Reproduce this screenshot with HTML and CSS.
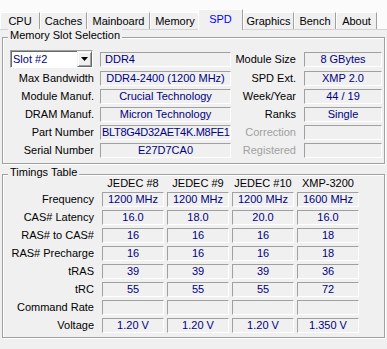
FILE: index.html
```html
<!DOCTYPE html>
<html>
<head>
<meta charset="utf-8">
<link rel="stylesheet" href="styles.css">
</head>
<body>
<div class="tabs">
  <div class="tab w-cpu">CPU</div>
  <div class="tab w-caches">Caches</div>
  <div class="tab w-main">Mainboard</div>
  <div class="tab w-mem">Memory</div>
  <div class="tab sel w-spd">SPD</div>
  <div class="tab w-gfx">Graphics</div>
  <div class="tab w-bench">Bench</div>
  <div class="tab w-about">About</div>
</div>
<div class="panel">
  <div class="group mem">
    <span class="group-title">Memory Slot Selection</span>
    <div class="mem-grid">
      <div class="select">
        <span class="select-text">Slot #2</span>
        <span class="select-btn"><svg width="7" height="4" viewBox="0 0 7 4"><polygon points="0,0 7,0 3.5,4" fill="#000"/></svg></span>
      </div>
      <div class="box left r1">DDR4</div>
      <div class="lbl rl r1">Module Size</div>
      <div class="box r1">8 GBytes</div>

      <div class="lbl">Max Bandwidth</div>
      <div class="box">DDR4-2400 (1200 MHz)</div>
      <div class="lbl rl">SPD Ext.</div>
      <div class="box">XMP 2.0</div>

      <div class="lbl">Module Manuf.</div>
      <div class="box">Crucial Technology</div>
      <div class="lbl rl">Week/Year</div>
      <div class="box">44 / 19</div>

      <div class="lbl">DRAM Manuf.</div>
      <div class="box">Micron Technology</div>
      <div class="lbl rl">Ranks</div>
      <div class="box">Single</div>

      <div class="lbl">Part Number</div>
      <div class="box tight">BLT8G4D32AET4K.M8FE1</div>
      <div class="lbl rl dis">Correction</div>
      <div class="box"></div>

      <div class="lbl">Serial Number</div>
      <div class="box">E27D7CA0</div>
      <div class="lbl rl dis">Registered</div>
      <div class="box"></div>
    </div>
  </div>

  <div class="group timings">
    <span class="group-title">Timings Table</span>
    <div class="t-grid">
      <div></div>
      <div class="th">JEDEC #8</div>
      <div class="th">JEDEC #9</div>
      <div class="th">JEDEC #10</div>
      <div class="th">XMP-3200</div>

      <div class="lbl tl">Frequency</div>
      <div class="box">1200 MHz</div>
      <div class="box">1200 MHz</div>
      <div class="box">1200 MHz</div>
      <div class="box">1600 MHz</div>

      <div class="lbl tl">CAS# Latency</div>
      <div class="box">16.0</div>
      <div class="box">18.0</div>
      <div class="box">20.0</div>
      <div class="box">16.0</div>

      <div class="lbl tl">RAS# to CAS#</div>
      <div class="box">16</div>
      <div class="box">16</div>
      <div class="box">16</div>
      <div class="box">18</div>

      <div class="lbl tl">RAS# Precharge</div>
      <div class="box">16</div>
      <div class="box">16</div>
      <div class="box">16</div>
      <div class="box">18</div>

      <div class="lbl tl">tRAS</div>
      <div class="box">39</div>
      <div class="box">39</div>
      <div class="box">39</div>
      <div class="box">36</div>

      <div class="lbl tl">tRC</div>
      <div class="box">55</div>
      <div class="box">55</div>
      <div class="box">55</div>
      <div class="box">72</div>

      <div class="lbl tl">Command Rate</div>
      <div class="box"></div>
      <div class="box"></div>
      <div class="box"></div>
      <div class="box"></div>

      <div class="lbl tl">Voltage</div>
      <div class="box">1.20 V</div>
      <div class="box">1.20 V</div>
      <div class="box">1.20 V</div>
      <div class="box">1.350 V</div>
    </div>
  </div>
</div>
</body>
</html>
```
FILE: styles.css
```css
* { box-sizing: border-box; }
html, body { margin: 0; padding: 0; }
body {
  width: 387px;
  height: 349px;
  overflow: hidden;
  background: #f0f0f0;
  font-family: "Liberation Sans", Arial, sans-serif;
  font-size: 11px;
  color: #000;
}

/* Tabs */
.tabs {
  display: flex;
  align-items: flex-end;
  height: 30px;
  background: #fbfbfb;
  border-bottom: 1px solid #d4d4d4;
}
.tab {
  height: 17px;
  line-height: 16px;
  text-align: center;
  white-space: nowrap;
  background: #f0f0f0;
  border-top: 1px solid #fff;
  border-left: 1px solid #fff;
  border-right: 1px solid #a0a0a0;
}
.tab.sel {
  height: 21px;
  margin-bottom: -1px;
  margin-left: -2px;
  padding-top: 1px;
  color: #0000ff;
  position: relative;
  z-index: 1;
}
.w-cpu { width: 40px; }
.w-caches { width: 47px; }
.w-main { width: 63px; }
.w-mem { width: 50px; }
.w-spd { width: 45px; }
.w-gfx { width: 51px; }
.w-bench { width: 42px; }
.w-about { width: 41px; }

/* Group boxes */
.panel { padding-top: 7px; }
.group {
  position: relative;
  margin: 0 2px;
  border: 1px solid #a0a0a0;
  box-shadow: 1px 1px 0 #fff, inset 1px 1px 0 #fff;
}
.group-title {
  position: absolute;
  top: -9px;
  left: 5px;
  padding: 0 2px;
  line-height: 13px;
  background: #f0f0f0;
  white-space: nowrap;
}
.mem { padding: 12px 1px 5px 7px; }
.timings { margin-top: 10px; padding: 2px 0 4px 0; }

.mem-grid {
  display: grid;
  grid-template-columns: 90px 131px 73px 78px;
  grid-template-rows: 18px repeat(5, 15px);
  row-gap: 3px;
}
.t-grid {
  display: grid;
  grid-template-columns: 96px repeat(4, 62px);
  grid-template-rows: 12px repeat(8, 15px);
  column-gap: 3px;
  row-gap: 3px;
}

.box {
  height: 15px;
  border: 1px solid;
  border-color: #a0a0a0 #fff #fff #a0a0a0;
  line-height: 13px;
  text-align: center;
  color: #000080;
  white-space: nowrap;
  overflow: hidden;
}
.box.left { text-align: left; padding-left: 4px; }
.box.tight { letter-spacing: -0.3px; text-align: left; padding-left: 1px; }
.r1 { align-self: end; margin-bottom: 1px; }

.lbl {
  line-height: 15px;
  text-align: right;
  padding-right: 6px;
  white-space: nowrap;
}
.lbl.rl { padding-right: 8px; }
.lbl.tl { padding-right: 5px; }
.lbl.dis { color: #a0a0a0; }
.th { text-align: center; line-height: 12px; white-space: nowrap; }

/* Dropdown */
.select {
  width: 83px;
  height: 18px;
  display: flex;
  background: #fff;
  border: 1px solid;
  border-color: #a0a0a0 #fff #fff #a0a0a0;
  box-shadow: inset 1px 1px 0 #696969;
  color: #000080;
}
.select-text {
  flex: 1;
  padding-left: 2px;
  line-height: 16px;
}
.select-btn {
  width: 15px;
  height: 16px;
  display: flex;
  align-items: center;
  justify-content: center;
  background: #f0f0f0;
  border: 1px solid;
  border-color: #f0f0f0 #696969 #696969 #f0f0f0;
  box-shadow: inset 1px 1px 0 #fff, inset -1px -1px 0 #a0a0a0;
}
```
